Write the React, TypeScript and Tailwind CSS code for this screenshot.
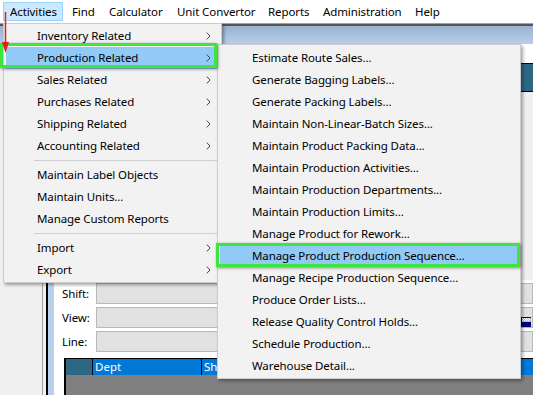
import React from 'react'

const font = { fontFamily: '"Noto Sans", "Open Sans", sans-serif' }

const topItems = [
  { label: 'Activities', w: 'w-[60px] mr-[3px]' },
  { label: 'Find', w: 'w-[37px]' },
  { label: 'Calculator', w: 'w-[68px]' },
  { label: 'Unit Convertor', w: 'w-[91px]' },
  { label: 'Reports', w: 'w-[55px]' },
  { label: 'Administration', w: 'w-[92px]' },
  { label: 'Help', w: 'w-[38px]' },
]

type Row = { label: string; sub?: boolean; active?: boolean } | 'sep'

const mainRows: Row[] = [
  { label: 'Inventory Related', sub: true },
  { label: 'Production Related', sub: true, active: true },
  { label: 'Sales Related', sub: true },
  { label: 'Purchases Related', sub: true },
  { label: 'Shipping Related', sub: true },
  { label: 'Accounting Related', sub: true },
  'sep',
  { label: 'Maintain Label Objects' },
  { label: 'Maintain Units...' },
  { label: 'Manage Custom Reports' },
  'sep',
  { label: 'Import', sub: true },
  { label: 'Export', sub: true },
]

const subRows = [
  'Estimate Route Sales...',
  'Generate Bagging Labels...',
  'Generate Packing Labels...',
  'Maintain Non-Linear-Batch Sizes...',
  'Maintain Product Packing Data...',
  'Maintain Production Activities...',
  'Maintain Production Departments...',
  'Maintain Production Limits...',
  'Manage Product for Rework...',
  'Manage Product Production Sequence...',
  'Manage Recipe Production Sequence...',
  'Produce Order Lists...',
  'Release Quality Control Holds...',
  'Schedule Production...',
  'Warehouse Detail...',
]

function Chevron() {
  return (
    <svg width="5" height="8" viewBox="0 0 5 8" className="shrink-0">
      <path d="M0.8 0.6 L4 4 L0.8 7.4" stroke="#444" strokeWidth="1" fill="none" />
    </svg>
  )
}

function MenuRow({ row, indent }: { row: Row; indent: string }) {
  if (row === 'sep') {
    return (
      <div className="h-[7px] flex items-center">
        <div className="ml-[30px] mr-[2px] h-px flex-1 bg-[#d0d0d0]" />
      </div>
    )
  }
  return (
    <div
      className={`h-[22px] mx-[2px] flex items-center ${indent} pr-[8px] text-[11.5px] tracking-[-0.1px] text-black ${
        row.active ? 'bg-[#91c9f7]' : ''
      }`}
    >
      <span className="flex-1 whitespace-nowrap">{row.label}</span>
      {row.sub && <Chevron />}
    </div>
  )
}

function Field() {
  return <div className="h-[21px] flex-1 bg-[#e1e1e1] border border-[#b9b9b9]" />
}

export default function App() {
  return (
    <div className="relative w-[533px] h-[395px] overflow-hidden bg-white" style={font}>
      {/* menu bar */}
      <div className="h-[23px] bg-white flex items-center pl-[3px] text-[11.5px] tracking-[-0.1px] text-black">
        {topItems.map((t, i) => (
          <div
            key={t.label}
            className={`${t.w} h-[19px] flex items-center pl-[6px] whitespace-nowrap ${
              i === 0 ? 'bg-[#cce8ff] border border-[#99d1ff] pl-[4px]' : ''
            }`}
          >
            {t.label}
          </div>
        ))}
      </div>
      <div className="h-px bg-[#a0a0a0]" />
      <div className="h-[2px] bg-[#555]" />
      <div className="h-[18px] bg-gradient-to-b from-[#97b2d2] to-[#b8cfe8]" />

      {/* window body */}
      <div className="flex h-[351px]">
        <div className="w-[43px] bg-[#f0f0f0] border-r border-[#a0a0a0]" />
        <div className="w-[3px] bg-[#f0f0f0]" />
        <div className="w-[2px] bg-black" />
        <div className="w-[6px] bg-[#b9d1ea]" />
        <div className="flex-1 flex flex-col bg-white">
          <div className="h-[19px] bg-white" />
          <div className="h-[29px] bg-[#2e6784] border-y border-black" />
          <div className="h-[188px] bg-[#f0f0f0]" />
          <div className="flex flex-col gap-[3px] pl-[8px] pt-[3px] text-[11.5px] tracking-[-0.1px] text-black">
            <div className="flex items-center">
              <span className="w-[34px]">Shift:</span>
              <Field />
            </div>
            <div className="flex items-center">
              <span className="w-[34px]">View:</span>
              <Field />
            </div>
            <div className="flex items-center">
              <span className="w-[34px]">Line:</span>
              <Field />
            </div>
          </div>
          <div className="ml-[10px] mt-[6px] flex-1 flex flex-col border-l-2 border-black">
            <div className="h-[17px] flex border-t border-black text-[11.5px] text-white">
              <div className="w-[26px] bg-[#2e6784]" />
              <div className="w-[110px] bg-[#0078d7] border-x border-black pl-[2px] leading-[16px]">
                Dept
              </div>
              <div className="flex-1 bg-[#0078d7] pl-[2px] leading-[16px]">Shift</div>
            </div>
            <div className="flex-1 bg-[#808080]" />
          </div>
        </div>
      </div>

      {/* small navy control at right */}
      <svg className="absolute left-[521px] top-[317px]" width="10" height="10" viewBox="0 0 10 10">
        <rect x="0" y="0" width="10" height="10" fill="#000080" />
        <rect x="1" y="1" width="9" height="4" fill="#c0c0c0" />
        <path d="M1 1h1v1H1zM3 1h1v1H3zM5 1h1v1H5zM7 1h1v1H7zM2 2h1v1H2zM4 2h1v1H4zM6 2h1v1H6zM8 2h1v1H8zM1 3h1v1H1zM3 3h1v1H3zM5 3h1v1H5zM7 3h1v1H7z" fill="#fff" />
      </svg>

      {/* main dropdown */}
      <div className="absolute left-[3px] top-[23px] w-[219px] bg-[#f2f2f2] border border-[#cccccc] py-[1px] shadow-[2px_2px_3px_rgba(0,0,0,0.35)]">
        {mainRows.map((r, i) => (
          <MenuRow key={i} row={r} indent="pl-[31px]" />
        ))}
      </div>

      {/* submenu */}
      <div className="absolute left-[217px] top-[44px] w-[304px] bg-[#f2f2f2] border border-[#cccccc] pt-[2px] pb-[1px] shadow-[2px_2px_3px_rgba(0,0,0,0.35)]">
        {subRows.map((s, i) => (
          <MenuRow key={s} row={{ label: s, active: i === 9 }} indent="pl-[32px]" />
        ))}
      </div>

      {/* annotations */}
      <div className="absolute left-0 top-[43px] w-[217px] h-[25px] border-[3px] border-[#3de63d] shadow-[1px_1px_3px_rgba(0,0,0,0.45)]" />
      <div className="absolute left-[216px] top-[243px] w-[304px] h-[24px] border-[3px] border-[#3de63d] shadow-[1px_1px_3px_rgba(0,0,0,0.45)]" />
      <svg className="absolute left-[1px] top-[12px]" width="9" height="42" viewBox="0 0 9 42">
        <line x1="4.5" y1="0" x2="4.5" y2="32" stroke="#e81c1c" strokeWidth="1.5" />
        <path d="M1 30 L8 30 L4.5 41 Z" fill="#e81c1c" />
      </svg>
    </div>
  )
}
